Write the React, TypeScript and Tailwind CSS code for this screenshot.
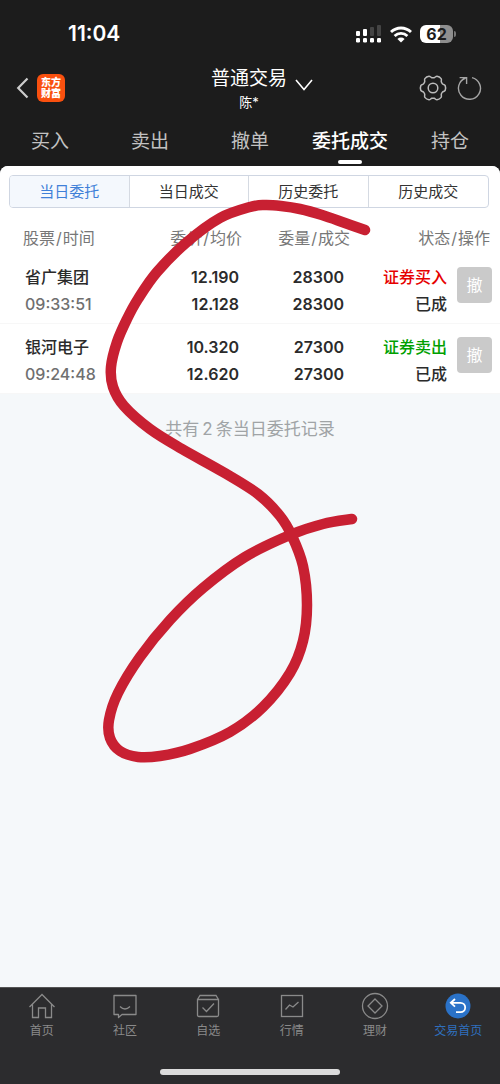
import type { ReactNode } from "react";

type Point = [number, number];

interface Order {
	name: string;
	time: string;
	price: string;
	avgPrice: string;
	amount: string;
	filled: string;
	side: "buy" | "sell";
	status: string;
}

const mainTabs = ["买入", "卖出", "撤单", "委托成交", "持仓"];
const segments = ["当日委托", "当日成交", "历史委托", "历史成交"];

const orders: Order[] = [
	{
		name: "省广集团",
		time: "09:33:51",
		price: "12.190",
		avgPrice: "12.128",
		amount: "28300",
		filled: "28300",
		side: "buy",
		status: "已成",
	},
	{
		name: "银河电子",
		time: "09:24:48",
		price: "10.320",
		avgPrice: "12.620",
		amount: "27300",
		filled: "27300",
		side: "sell",
		status: "已成",
	},
];

const scribble: Point[] = [
	[365, 230], [345, 223], [322, 215], [300, 209], [281, 206], [265, 205],
	[250, 207], [220, 218], [187, 242], [157, 272], [138, 299], [127, 319],
	[117, 342], [111, 367], [113, 387], [124, 406], [150, 429], [182, 449],
	[223, 472], [258, 494], [280, 516], [292, 536], [303, 566], [307, 605],
	[303, 641], [290, 673], [263, 707], [230, 732], [190, 749], [160, 756],
	[138, 757], [120, 751], [110, 738], [109, 720], [118, 693], [140, 657],
	[170, 620], [203, 588], [245, 557], [290, 535], [323, 524], [352, 519],
];

// smooth curve through every point
function smoothPath(points: Point[], closed = false) {
	const n = points.length;
	const at = (i: number) =>
		closed ? points[(i + n) % n] : points[Math.min(Math.max(i, 0), n - 1)];
	let d = `M${points[0][0]} ${points[0][1]}`;
	for (let i = 0; i < (closed ? n : n - 1); i++) {
		const [a, b, c, e] = [at(i - 1), at(i), at(i + 1), at(i + 2)];
		d += `C${b[0] + (c[0] - a[0]) / 6} ${b[1] + (c[1] - a[1]) / 6} ${c[0] - (e[0] - b[0]) / 6} ${c[1] - (e[1] - b[1]) / 6} ${c[0]} ${c[1]}`;
	}
	return closed ? d + "Z" : d;
}

const gearPoints = [0, 60, 120, 180, 240, 300].flatMap((base) =>
	[
		[-11, 12.4],
		[11, 12.4],
		[23, 10.4],
		[37, 10.4],
	].map(([offset, r]): Point => {
		const angle = ((base + offset) * Math.PI) / 180;
		return [14 + r * Math.cos(angle), 14 + r * Math.sin(angle)];
	}),
);

function StatusBar() {
	return (
		<div className="flex h-16 items-center justify-between pl-[68px] pr-11 pt-1">
			<span className="text-[21px] font-semibold leading-6 text-white">
				11:04
			</span>
			<div className="flex items-center gap-2">
				<svg width="26" height="18" viewBox="0 0 26 18" fill="#fff">
					<rect x="0" y="6" width="4" height="5" rx="1" />
					<rect x="7" y="4" width="4" height="7" rx="1" />
					<rect x="14" y="2" width="4" height="9" rx="1" fill="#444" />
					<rect x="21" y="0" width="4" height="11" rx="1" fill="#444" />
					<rect x="0" y="13" width="4" height="4.5" rx="1.2" />
					<rect x="7" y="13" width="4" height="4.5" rx="1.2" />
					<rect x="14" y="13" width="4" height="4.5" rx="1.2" />
					<rect x="21" y="13" width="4" height="4.5" rx="1.2" />
				</svg>
				<svg width="22" height="17" viewBox="0 0 22 17" fill="none" stroke="#fff" strokeWidth="2.8">
					<path d="M1 6.1a14.2 14.2 0 0 1 20 0" />
					<path d="M4.6 10a9.2 9.2 0 0 1 12.8 0" />
					<path d="M11 16.6 7.4 13a5.2 5.2 0 0 1 7.2 0z" fill="#fff" stroke="none" />
				</svg>
				<div className="flex items-center gap-px">
					<span className="flex h-[18px] w-[33px] items-center justify-center rounded-md bg-linear-to-r from-white from-62% to-[#8e8e8e] to-62% text-base font-bold leading-[18px] text-[#1c1c1c]">
						62
					</span>
					<span className="h-[6px] w-[2px] rounded-r bg-[#777]" />
				</div>
			</div>
		</div>
	);
}

function TitleBar() {
	return (
		<div className="grid h-12 grid-cols-[1fr_auto_1fr] items-center pl-4 pr-[18px]">
			<div className="flex items-center gap-2">
				<button aria-label="返回">
					<svg width="13" height="22" viewBox="0 0 13 22" fill="none" stroke="#ccc" strokeWidth="2.2">
						<path d="M11.5 1.5 2.2 11l9.3 9.5" />
					</svg>
				</button>
				<span className="flex size-7 flex-col items-center justify-center rounded-md bg-[#f9500f] text-[10px] font-black leading-[11px] text-white">
					<span>东方</span>
					<span>财富</span>
				</span>
			</div>
			<button className="flex flex-col items-center pt-[2px] text-white">
				<span className="flex h-[26px] items-center gap-2 pl-[26px] text-[19px] leading-[26px]">
					普通交易
					<svg className="mt-3" width="18" height="12" viewBox="0 0 18 12" fill="none" stroke="currentColor" strokeWidth="1.6">
						<path d="M1 1l8 9.5L17 1" />
					</svg>
				</span>
				<span className="text-[13px] leading-5">陈*</span>
			</button>
			<div className="flex items-center justify-end gap-[9px]">
				<button aria-label="设置">
					<svg width="28" height="28" viewBox="0 0 28 28" fill="none" stroke="#bbb" strokeWidth="1.5">
						<path d={smoothPath(gearPoints, true)} />
						<circle cx="14" cy="14" r="4.8" />
					</svg>
				</button>
				<button aria-label="刷新">
					<svg width="26" height="26" viewBox="0 0 26 26" fill="none" stroke="#a5a5a5" strokeWidth="1.4">
						<path d="M16 2.6A11 11 0 1 1 9.6 3M3.6 2.6h7v6.4" />
					</svg>
				</button>
			</div>
		</div>
	);
}

function MainTabs() {
	return (
		<nav className="grid h-[54px] grid-cols-5">
			{mainTabs.map((tab) =>
				tab === "委托成交" ? (
					<button
						key={tab}
						className="flex flex-col items-center justify-between pb-[2px] pt-4 text-[19px] font-medium leading-7 text-white"
					>
						{tab}
						<span className="h-1 w-6 rounded-sm bg-white" />
					</button>
				) : (
					<button
						key={tab}
						className="flex justify-center pt-4 text-[19px] leading-7 text-[#c2c2c2]"
					>
						{tab}
					</button>
				),
			)}
		</nav>
	);
}

function ColumnTitle({ first, second }: { first: string; second: string }) {
	return (
		<>
			{first}
			<span className="mx-px">/</span>
			{second}
		</>
	);
}

function OrderTable() {
	return (
		<table className="w-full table-fixed border-separate border-spacing-0 text-right">
			<thead className="text-base leading-8 text-[#777]">
				<tr className="*:pt-[14px] *:font-normal">
					<th className="w-[25%] pl-[23px] text-left">
						<ColumnTitle first="股票" second="时间" />
					</th>
					<th className="w-[24%] pr-[3px]">
						<ColumnTitle first="委价" second="均价" />
					</th>
					<th className="w-[21%]">
						<ColumnTitle first="委量" second="成交" />
					</th>
					<th className="w-[30%] pr-[10px]">
						<ColumnTitle first="状态" second="操作" />
					</th>
				</tr>
			</thead>
			<tbody className="text-base font-semibold leading-[27px] text-[#2b2b2b]">
				{orders.map((order) => (
					<tr key={order.name} className="*:border-b *:border-[#f7f7f7] *:pb-[5px] *:pt-[10px]">
						<td className="pl-[25px] text-left">
							<div className="font-medium">{order.name}</div>
							<div className="font-medium text-[#707070]">{order.time}</div>
						</td>
						<td className="pr-[6px]">
							<div>{order.price}</div>
							<div>{order.avgPrice}</div>
						</td>
						<td className="pr-[6px]">
							<div>{order.amount}</div>
							<div>{order.filled}</div>
						</td>
						<td className="pr-2">
							<div className="flex items-start justify-end gap-[10px]">
								<div className="font-medium">
									{order.side === "buy" ? (
										<div className="text-[#e60000]">证券买入</div>
									) : (
										<div className="text-[#00a000]">证券卖出</div>
									)}
									<div>{order.status}</div>
								</div>
								<button
									disabled
									className="mt-[3px] h-9 w-[35px] rounded-sm bg-[#cacaca] font-normal text-white"
								>
									撤
								</button>
							</div>
						</td>
					</tr>
				))}
			</tbody>
		</table>
	);
}

function NavIcon({ children }: { children: ReactNode }) {
	return (
		<svg width="28" height="28" viewBox="0 0 28 28" fill="none" stroke="currentColor" strokeWidth="1.3">
			{children}
		</svg>
	);
}

const navItems = [
	{
		label: "首页",
		icon: <path d="M1.5 15 14 2.5 26.5 15M4.5 12.5v13h6V16h7v9.5h6v-13" />,
	},
	{
		label: "社区",
		icon: (
			<>
				<path d="M3 3.5h22v19H11l-3.5 3v-3H3Z" strokeLinejoin="round" />
				<path d="M9 14.5q5 5 10 0" />
			</>
		),
	},
	{
		label: "自选",
		icon: (
			<>
				<path d="M3.5 7.5h21V23q0 1.5-1.5 1.5H5q-1.5 0-1.5-1.5ZM3.5 7.5l2.5-4h16l2.5 4" />
				<path d="m8.5 15.5 4 4 7.5-8" />
			</>
		),
	},
	{
		label: "行情",
		icon: (
			<>
				<rect x="3.5" y="3.5" width="21" height="21" />
				<path d="m7.5 17.5 4-4.5 3.5 2 5.5-5" />
			</>
		),
	},
	{
		label: "理财",
		icon: (
			<>
				<circle cx="14" cy="14" r="12.5" />
				<path d="m14 7 7 7-7 7-7-7z" />
			</>
		),
	},
];

function BottomNav() {
	return (
		<footer className="h-[97px] border-t border-[#555] bg-[#2c2c2e]">
			<nav className="grid grid-cols-6 pt-1 text-xs leading-[22px] text-[#8a8a8a]">
				{navItems.map((item) => (
					<a key={item.label} href="#" className="flex flex-col items-center">
						<NavIcon>{item.icon}</NavIcon>
						{item.label}
					</a>
				))}
				<a href="#" className="flex flex-col items-center text-[#2f6fbd]">
					<svg width="28" height="28" viewBox="0 0 28 28" fill="none" stroke="#fff" strokeWidth="1.8">
						<circle cx="14" cy="14" r="12.5" fill="#2a72c8" stroke="none" />
						<path d="M11 7 6.8 10.8l4.2 3.8M7 10.8h9.5a4.7 4.7 0 0 1 0 9.4H12" />
					</svg>
					交易首页
				</a>
			</nav>
			<div className="mx-auto mt-[27px] h-[6px] w-[36%] rounded-full bg-[#dcdcdc]" />
		</footer>
	);
}

export default function App() {
	return (
		<div className="relative flex min-h-screen flex-col bg-[#1c1c1c] font-['Inter','Noto_Sans_CJK_SC',sans-serif]">
			<header>
				<StatusBar />
				<TitleBar />
				<MainTabs />
			</header>

			<main className="flex-1 overflow-hidden rounded-t-lg bg-[#f5f8fa]">
				<section className="bg-white pt-[9px]">
					<div className="ml-[9px] mr-[11px] grid h-[33px] grid-cols-4 divide-x divide-[#d5dae2] overflow-hidden rounded border border-[#cfd6e2] text-[15px] text-[#333]">
						{segments.map((segment, i) => (
							<button
								key={segment}
								className={i === 0 ? "bg-[#f4f8fd] pt-[2px] text-[#3f80d8]" : "pt-[2px]"}
							>
								{segment}
							</button>
						))}
					</div>
					<OrderTable />
				</section>
				<p className="pt-[21px] text-center text-[17px] leading-7 text-[#a0a4a6]">
					共有<span className="mx-[3px]">2</span>条当日委托记录
				</p>
			</main>

			<BottomNav />

			<svg
				className="pointer-events-none absolute left-0 top-0 w-full"
				viewBox="0 0 500 1084"
				fill="none"
				stroke="#c82032"
				strokeWidth="10.5"
				strokeLinecap="round"
				strokeLinejoin="round"
			>
				<path d={smoothPath(scribble)} />
			</svg>
		</div>
	);
}
